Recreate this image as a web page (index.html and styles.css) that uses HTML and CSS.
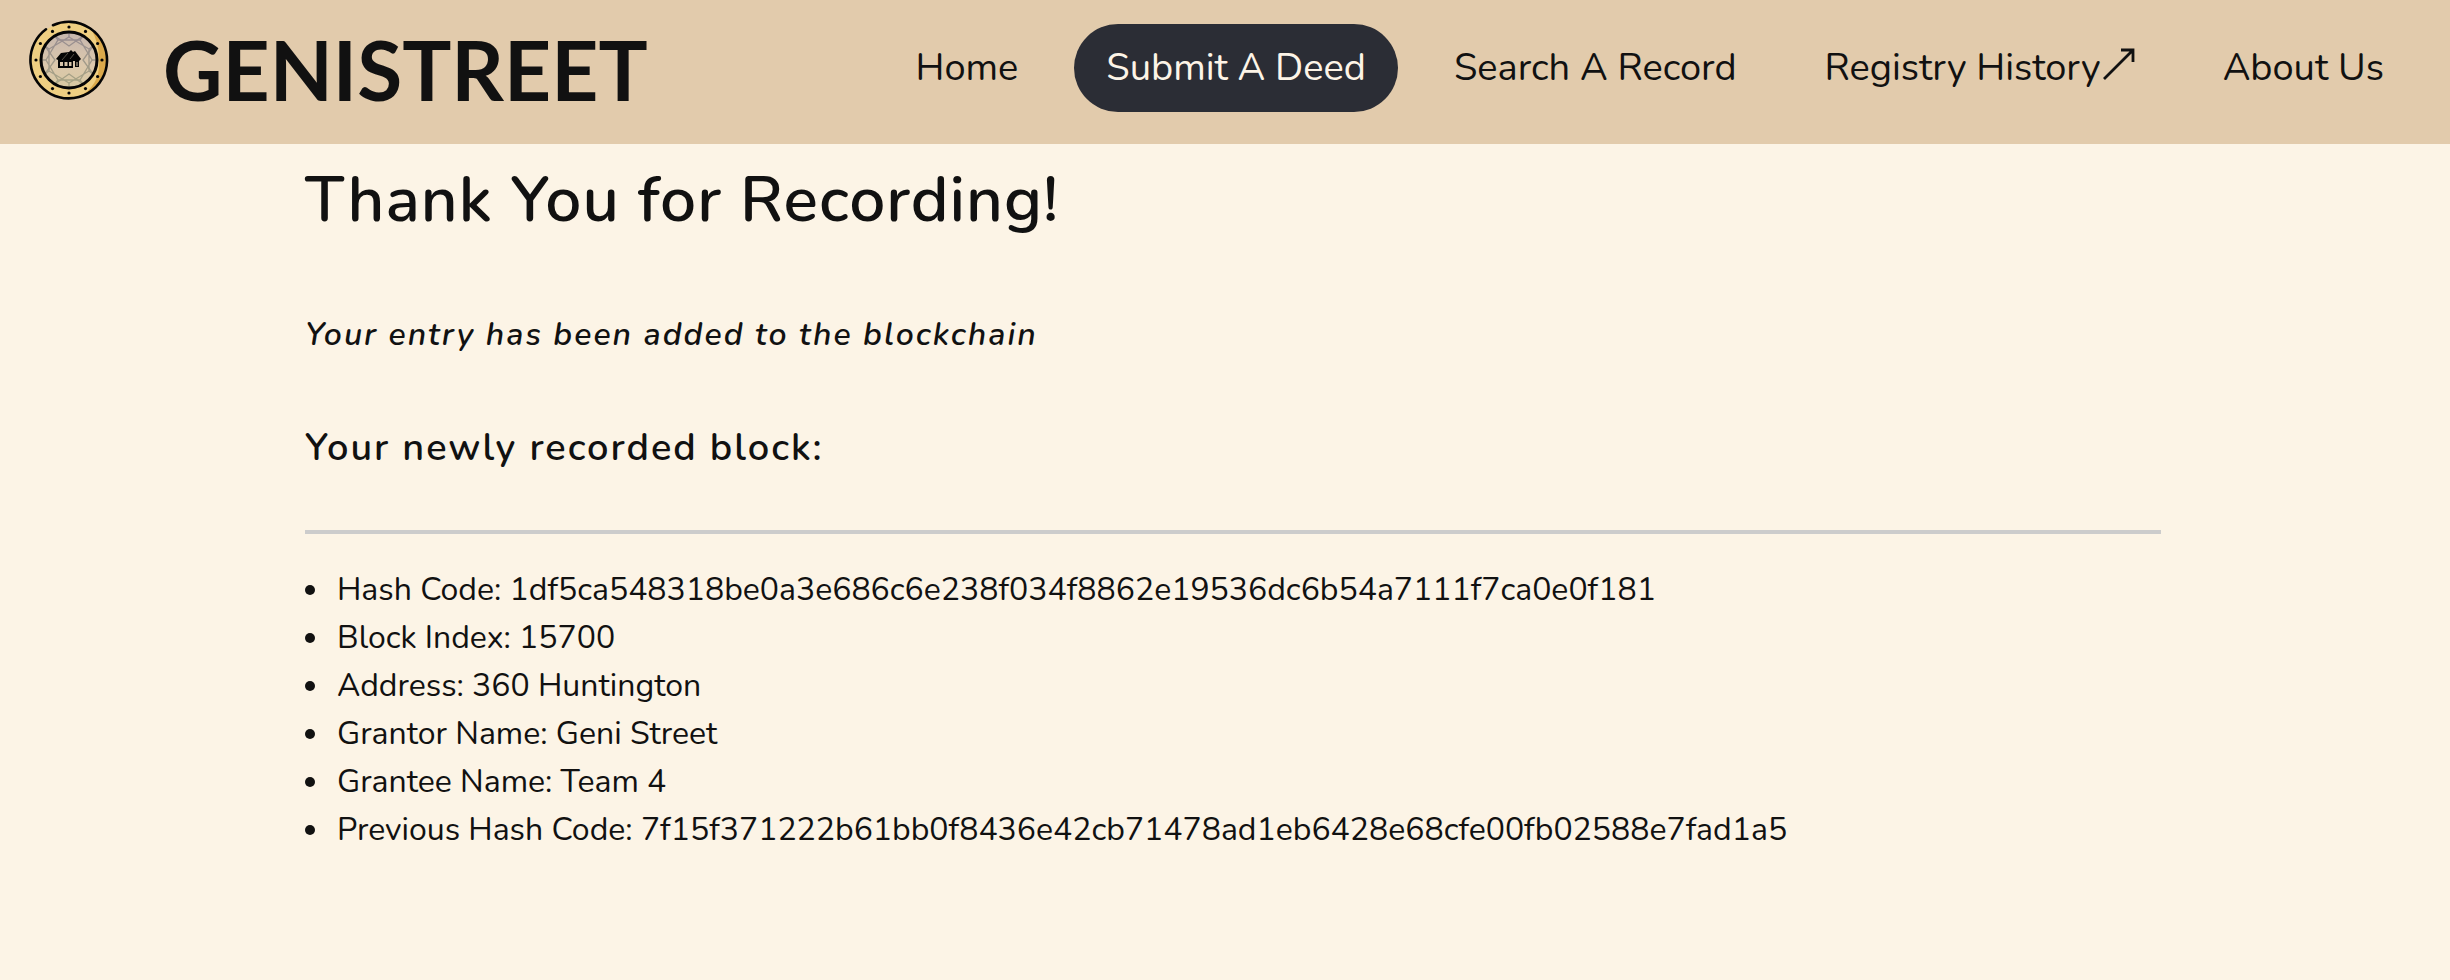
FILE: index.html
```html
<!DOCTYPE html>
<html lang="en">
<head>
<meta charset="utf-8">
<meta name="viewport" content="width=device-width, initial-scale=1">
<title>Genistreet</title>
<link rel="stylesheet" href="styles.css">
</head>
<body>
<header class="site-header">
  <a class="brand" href="#">
    <svg class="brand-coin" viewBox="0 0 80 80" aria-hidden="true">
      <defs>
        <linearGradient id="glass" x1="0" y1="0" x2="0" y2="1"><stop offset="0" stop-color="#c6b6ae"/><stop offset=".6" stop-color="#dcc8ac"/><stop offset="1" stop-color="#d8c9a2"/></linearGradient>
        <linearGradient id="lines" x1="0" y1="11" x2="0" y2="69" gradientUnits="userSpaceOnUse"><stop offset="0" stop-color="#958992"/><stop offset="1" stop-color="#aaa782"/></linearGradient>
      </defs>
      <circle cx="40" cy="40" r="38" fill="#efcf82"/>
      <path d="M62 9A38 38 0 0 1 50 77Q72 65 70 40Q70 22 62 9Z" fill="#dba94b"/>
      <circle cx="40" cy="40" r="28" fill="url(#glass)"/>
      <g fill="none" stroke="url(#lines)" stroke-width="1.300">
        <path d="M40 17L60 29V51L40 63L20 51V29ZM17 40L29 20H51L63 40L51 60H29Z"/>
        <path d="M40 12V17M40 63V68M12 40H17M63 40H68M26 16L29 20M54 16L51 20M26 64L29 60M54 64L51 60M16 26L20 29M64 26L60 29M16 54L20 51M64 54L60 51"/>
        <path d="M26 16L40 26L54 16M26 64L40 54L54 64M16 26L26 40L16 54M64 26L54 40L64 54"/>
      </g>
      <circle cx="40" cy="40" r="28" fill="none" stroke="#050505" stroke-width="3"/>
      <path d="M24 5.200A38.300 38.300 0 1 1 17 9.300" fill="none" stroke="#050505" stroke-width="2.600" stroke-linecap="round"/>
      <g fill="#050505">
        <circle cx="40" cy="7" r="1.600"/><circle cx="56.500" cy="11.400" r="1.600"/><circle cx="68.600" cy="23.500" r="1.600"/><circle cx="73" cy="40" r="1.600"/><circle cx="68.600" cy="56.500" r="1.600"/><circle cx="56.500" cy="68.600" r="1.600"/><circle cx="40" cy="73" r="1.600"/><circle cx="23.500" cy="68.600" r="1.600"/><circle cx="11.400" cy="56.500" r="1.600"/><circle cx="7" cy="40" r="1.600"/><circle cx="11.400" cy="23.500" r="1.600"/><circle cx="23.500" cy="11.400" r="1.600"/>
        <path d="M27 39L32 33L40 32L42 30L44 32L46 31L52 39L50 41V47H46V41H44V48H29V40Z"/>
      </g>
      <path d="M31 42h3v4h-3zM35.500 42h3v4h-3zM40 42h2.500v4H40zM47.500 42h1v4h-1z" fill="#d8c5aa"/>
      <path d="M33 40L39 33M41 39L45 34" stroke="#777064" stroke-width=".7"/>
    </svg>
    <span class="brand-name">GENISTREET</span>
  </a>
  <nav class="site-nav" aria-label="Main">
    <a class="nav-link" href="#">Home</a>
    <a class="nav-link nav-link-active" href="#" aria-current="page">Submit A Deed</a>
    <a class="nav-link" href="#">Search A Record</a>
    <a class="nav-link" href="#">Registry History<svg class="nav-arrow" viewBox="0 0 32 32" aria-hidden="true"><path d="M1 31L29 3M18 2H30V14" fill="none" stroke="currentColor" stroke-width="2.800"/></svg></a>
    <a class="nav-link" href="#">About Us</a>
  </nav>
</header>
<main class="receipt">
  <h1 class="receipt-title">Thank You for Recording!</h1>
  <p class="receipt-note">Your entry has been added to the blockchain</p>
  <h2 class="receipt-subtitle">Your newly recorded block:</h2>
  <hr class="receipt-rule">
  <ul class="block-details">
    <li>Hash Code: 1df5ca548318be0a3e686c6e238f034f8862e19536dc6b54a7111f7ca0e0f181</li>
    <li>Block Index: 15700</li>
    <li>Address: 360 Huntington</li>
    <li>Grantor Name: Geni Street</li>
    <li>Grantee Name: Team 4</li>
    <li>Previous Hash Code: 7f15f371222b61bb0f8436e42cb71478ad1eb6428e68cfe00fb02588e7fad1a5</li>
  </ul>
</main>
</body>
</html>
```
FILE: styles.css
```css
* {
  box-sizing: border-box;
}

body {
  margin: 0;
  background: #fcf4e6;
  color: #111;
  font-family: Nunito, "Open Sans", sans-serif;
  font-size: 32px;
  line-height: 48px;
}

.site-header {
  display: flex;
  justify-content: space-between;
  min-height: 144px;
  padding: 0 34px 0 29px;
  background: #e2cbac;
}

.brand {
  display: flex;
  gap: 54px;
  color: inherit;
  text-decoration: none;
}

.brand-coin {
  width: 80px;
  height: 80px;
  margin-top: 20px;
}

.brand-name {
  font-family: Optima, Lato, sans-serif;
  font-size: 82px;
  font-weight: 700;
  line-height: 138px;
}

.site-nav {
  display: flex;
  align-items: flex-start;
  gap: 24px;
  padding-top: 24px;
}

.nav-link {
  padding: 20px 32px;
  border-radius: 44px;
  color: inherit;
  font-size: 38px;
  white-space: nowrap;
  text-decoration: none;
}

.nav-link-active {
  background: #2b2d35;
  color: #fdf4e7;
}

.nav-arrow {
  width: 32px;
  height: 32px;
  margin-left: 2px;
}

.receipt {
  width: 90%;
  max-width: 1872px;
  margin: 0 auto;
  padding: 16px 0 0 16px;
}

.receipt-title {
  margin: 0;
  font-size: 64px;
  font-weight: 600;
  letter-spacing: 1px;
  line-height: 80px;
}

.receipt-note,
.receipt-subtitle {
  font-weight: 600;
  letter-spacing: 2px;
}

.receipt-note {
  margin: 71px 0 0;
  font-style: italic;
}

.receipt-subtitle {
  margin: 65px 0 0;
  font-size: 38px;
}

.receipt-rule {
  height: 4px;
  margin: 58px 0 32px;
  border: 0;
  background: #ccc;
}

.block-details {
  margin: 0;
  padding: 0;
  list-style: none;
}

.block-details li {
  display: flex;
  align-items: center;
  gap: 22px;
}

.block-details li::before {
  flex: none;
  width: 10px;
  height: 10px;
  border-radius: 50%;
  background: #111;
  content: "";
}
```
